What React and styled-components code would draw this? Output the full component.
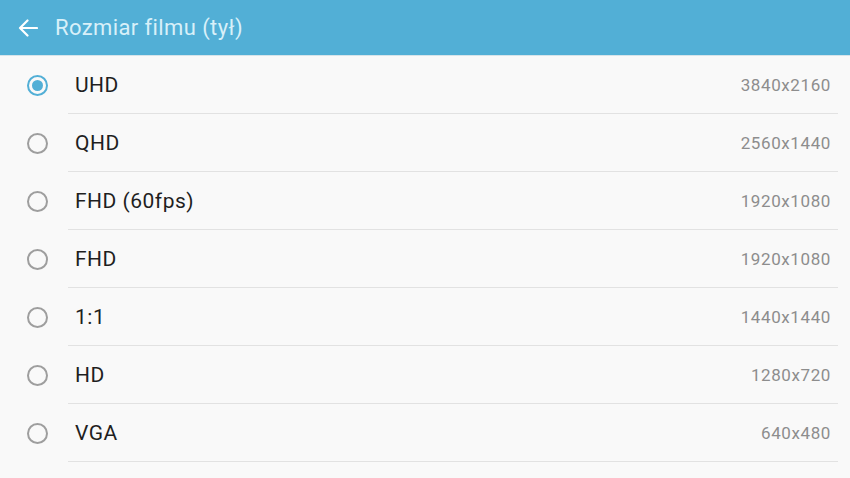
import React from "react";
import styled, { createGlobalStyle } from "styled-components";

const Global = createGlobalStyle`
  html, body { margin: 0; padding: 0; background: #f9f9f9; }
  body { font-family: Roboto, "Noto Sans", sans-serif; }
`;

const Page = styled.div`
  width: 850px;
  height: 478px;
  background: #f9f9f9;
  overflow: hidden;
`;

const Header = styled.header`
  height: 56px;
  box-sizing: border-box;
  background: #52afd6;
  border-bottom: 1px solid #d6e4ea;
  display: flex;
  align-items: center;
  padding-left: 18px;
  gap: 17px;
`;

const Title = styled.h1`
  margin: 0;
  font-size: 22px;
  font-weight: 400;
  color: #d8f0f9;
  letter-spacing: 0.4px;
`;

const List = styled.ul`
  list-style: none;
  margin: 0;
  padding: 0;
`;

const Row = styled.li`
  display: flex;
  align-items: center;
  height: 58px;
`;

const RadioCell = styled.div`
  width: 75px;
  flex: none;
  display: flex;
  align-items: center;
  padding-left: 27px;
  box-sizing: border-box;
`;

const Radio = styled.span`
  width: 21px;
  height: 21px;
  box-sizing: border-box;
  border-radius: 50%;
  border: 2px solid ${(p) => (p.$on ? "#52afd6" : "#9e9e9e")};
  display: flex;
  align-items: center;
  justify-content: center;
  &::after {
    content: "";
    width: 11px;
    height: 11px;
    border-radius: 50%;
    background: ${(p) => (p.$on ? "#52afd6" : "transparent")};
  }
`;

const Body = styled.div`
  flex: 1;
  align-self: stretch;
  display: flex;
  align-items: center;
  justify-content: space-between;
  margin-right: 12px;
  margin-left: -7px;
  padding-left: 7px;
  padding-right: 7px;
  border-bottom: 1px solid #e2e2e2;
`;

const Label = styled.span`
  font-size: 21px;
  color: #1f1f1f;
  letter-spacing: 0.5px;
`;

const Value = styled.span`
  font-size: 17px;
  color: #8d8d8d;
  letter-spacing: 0.6px;
`;

const items = [
  ["UHD", "3840x2160"],
  ["QHD", "2560x1440"],
  ["FHD (60fps)", "1920x1080"],
  ["FHD", "1920x1080"],
  ["1:1", "1440x1440"],
  ["HD", "1280x720"],
  ["VGA", "640x480"],
];

export default function App() {
  return (
    <Page>
      <Global />
      <Header>
        <svg width="20" height="18" viewBox="0 0 20 18" fill="none">
          <path d="M19 9H2M9.5 1.5L2 9l7.5 7.5" stroke="#ffffff" strokeWidth="2.2" strokeLinecap="round" strokeLinejoin="round" />
        </svg>
        <Title>Rozmiar filmu (tył)</Title>
      </Header>
      <List>
        {items.map(([l, v], i) => (
          <Row key={i}>
            <RadioCell>
              <Radio $on={i === 0} />
            </RadioCell>
            <Body>
              <Label>{l}</Label>
              <Value>{v}</Value>
            </Body>
          </Row>
        ))}
      </List>
    </Page>
  );
}
